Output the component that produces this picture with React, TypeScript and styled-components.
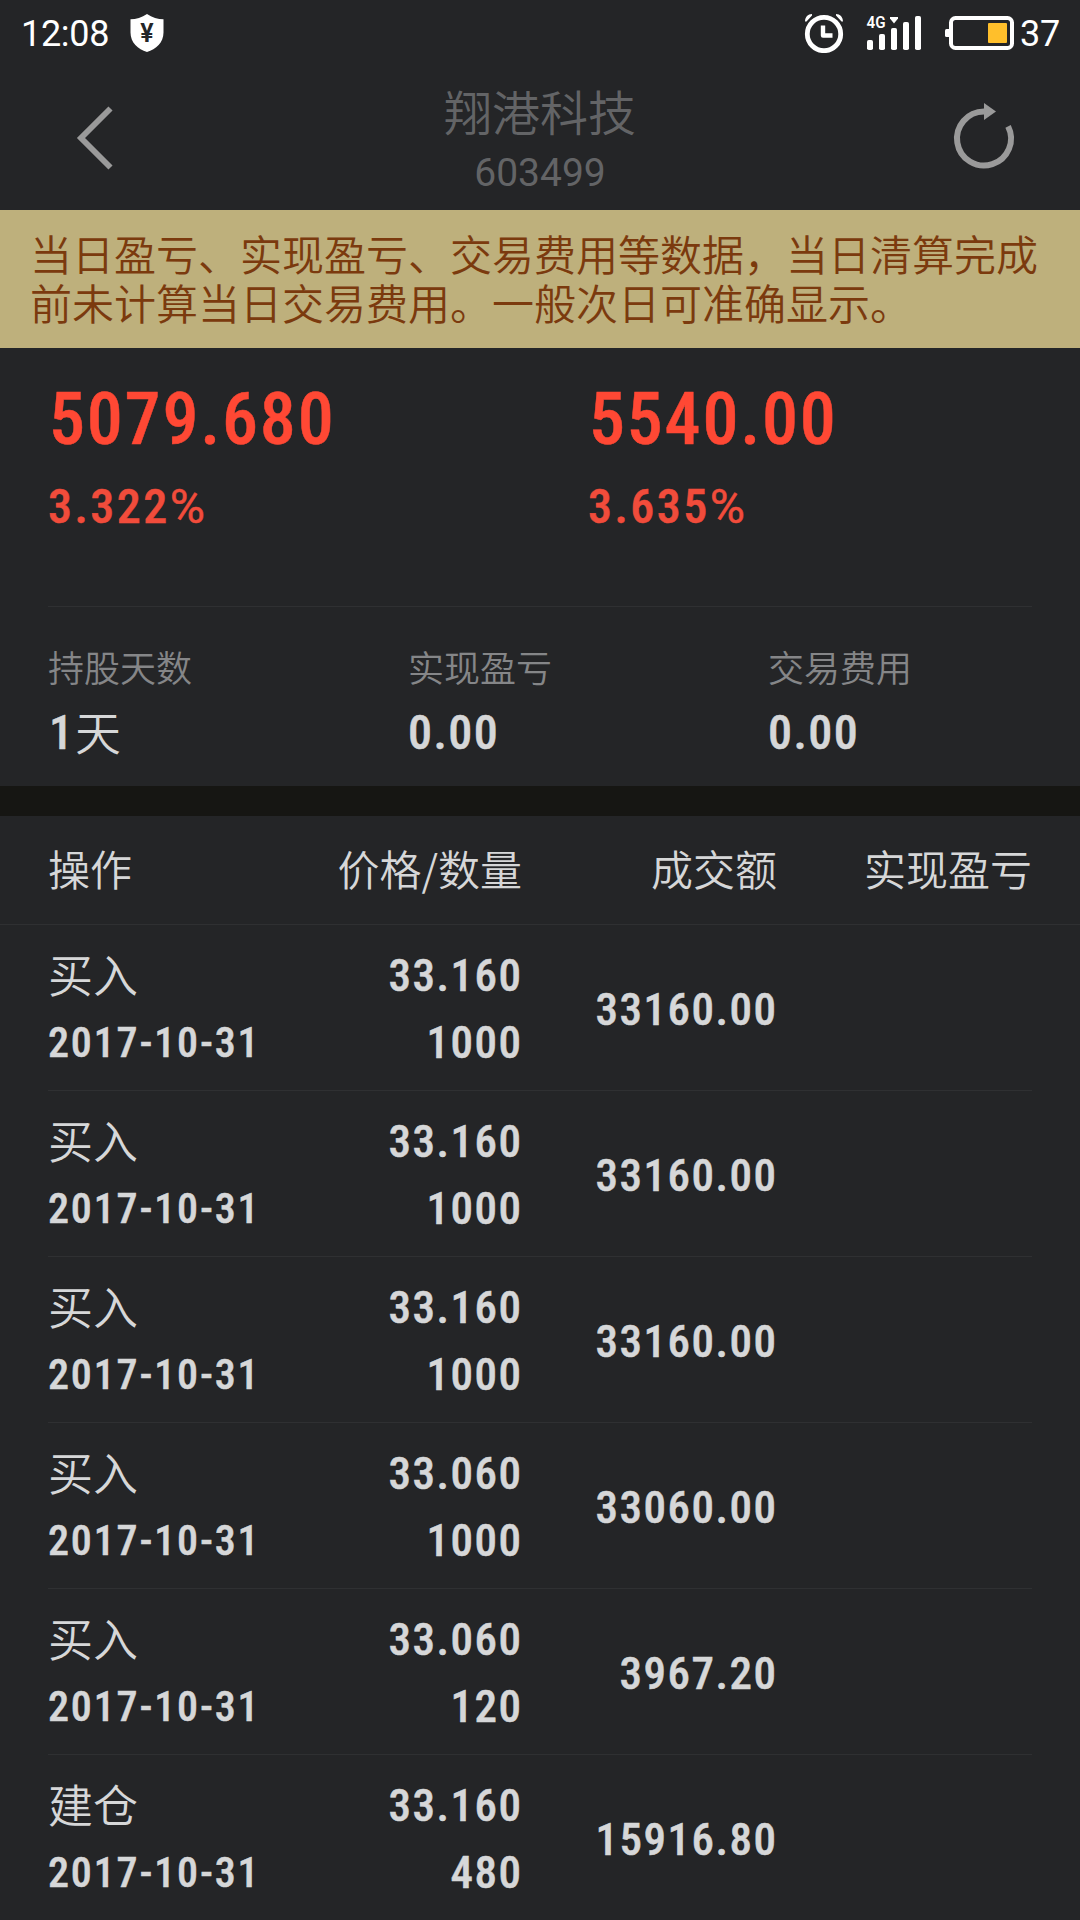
import React from "react";
import styled, { createGlobalStyle } from "styled-components";

const cjk = `"Noto Sans CJK SC", Roboto, sans-serif`;
const latin = `Roboto, "Noto Sans CJK SC", sans-serif`;

const GlobalStyle = createGlobalStyle`
  * { box-sizing: border-box; }
  body { margin: 0; background: #242527; }
`;

const Screen = styled.div`
  width: 1080px;
  height: 1920px;
  overflow: hidden;
  display: flex;
  flex-direction: column;
  background: #242527;
  color: #d6d7d8;
  font-family: ${cjk};
  font-weight: 350;
`;

const StatusBar = styled.div`
  height: 66px;
  flex: none;
  display: flex;
  align-items: center;
  padding: 0 20px 0 21px;
  color: #fff;
`;

const StatusText = styled.span<{ $left?: number; $width: number }>`
  flex: none;
  width: ${(p) => p.$width}px;
  margin-left: ${(p) => p.$left ?? 0}px;
  padding-top: 2px;
  font: 400 36px/64px ${latin};
  letter-spacing: -0.3px;
  white-space: nowrap;
`;

const StatusIcon = styled.svg<{ $left?: string }>`
  flex: none;
  display: block;
  margin-left: ${(p) => p.$left ?? "0"};
`;

const NavBar = styled.header`
  height: 144px;
  flex: none;
  display: grid;
  grid-template-columns: 190px 1fr 190px;
`;

const NavButton = styled.button<{ $align: "start" | "end" }>`
  display: flex;
  align-items: center;
  justify-content: ${(p) => (p.$align === "start" ? "flex-start" : "flex-end")};
  border: 0;
  padding: 0 62px 0 72px;
  background: none;
  svg { flex: none; display: block; }
`;

const TitleBlock = styled.div`
  display: flex;
  flex-direction: column;
  align-items: center;
  padding-top: 14px;
  color: #636466;
`;

const Title = styled.div`
  font-size: 48px;
  line-height: 60px;
`;

const Code = styled.div`
  font: 400 39px/60px ${latin};
  padding-top: 3px;
`;

const Notice = styled.div`
  height: 138px;
  flex: none;
  padding: 22px 30px 0;
  background: #beb07c;
  color: #7b3a0e;
  font-family: ${latin};
  font-size: 42px;
  line-height: 49px;
  white-space: nowrap;
`;

const Num = styled.span<{ $size: number; $line?: number; $gap?: number }>`
  font-family: ${latin};
  font-weight: 500;
  font-size: ${(p) => p.$size}px;
  line-height: ${(p) => p.$line ?? 60}px;
  letter-spacing: ${(p) => p.$gap ?? 1.5}px;
  margin-right: ${(p) => -(p.$gap ?? 1.5)}px;
  font-stretch: 87.5%;
  -webkit-text-stroke: 0.5px currentColor;
  white-space: nowrap;
`;

const Summary = styled.section`
  height: 258px;
  flex: none;
  display: grid;
  grid-template-columns: 540px 1fr;
  padding-left: 48px;
  color: #ff4834;
`;

const SummaryItem = styled.div`
  display: flex;
  flex-direction: column;
  padding-top: 32px;
`;

const Profit = styled(Num)`
  padding-left: 1px;
`;

const Percent = styled(Num)`
  margin-top: 17px;
  color: #f14c3b;
`;

const PercentSign = styled.span`
  font-stretch: 100%;
  font-weight: 400;
`;

const Divider = styled.div<{ $full?: boolean }>`
  height: 1px;
  flex: none;
  margin: ${(p) => (p.$full ? "0" : "0 48px")};
  background: #2f3032;
`;

const Stats = styled.section`
  height: 179px;
  flex: none;
  display: grid;
  grid-template-columns: repeat(3, 360px);
  padding-left: 48px;
`;

const Stat = styled.div`
  display: flex;
  flex-direction: column;
  padding-top: 34px;
`;

const StatLabel = styled.span`
  color: #858688;
  font-size: 36px;
  line-height: 50px;
`;

const StatValue = styled.div<{ $inset?: number }>`
  padding: 12px 0 0 ${(p) => p.$inset ?? 0}px;
  display: flex;
  align-items: flex-start;
  line-height: 60px;
`;

const Unit = styled.span`
  font-family: ${latin};
  font-size: 46px;
  line-height: 62px;
  margin-left: 2px;
`;

const Band = styled.div`
  height: 30px;
  flex: none;
  background: #161613;
`;

const columns = "220px 254px 255px 255px";

const TableHead = styled.div`
  height: 108px;
  flex: none;
  display: grid;
  grid-template-columns: ${columns};
  align-items: center;
  padding: 0 0 4px 48px;
  font-size: 42px;
  line-height: 60px;
`;

const HeadCell = styled.span<{ $right?: boolean }>`
  text-align: ${(p) => (p.$right ? "right" : "left")};
  white-space: nowrap;
`;

const Row = styled.div`
  height: 165px;
  flex: none;
  display: grid;
  grid-template-columns: ${columns};
  align-items: center;
  padding: 3px 0 0 48px;
`;

const Pair = styled.div<{ $right?: boolean }>`
  display: flex;
  flex-direction: column;
  align-items: ${(p) => (p.$right ? "flex-end" : "flex-start")};
  gap: 7px;
  padding-right: ${(p) => (p.$right ? 1 : 0)}px;
`;

const Action = styled.span`
  margin: -2px 0 2px;
  font-size: 45px;
  line-height: 60px;
`;

const Amount = styled.div`
  display: flex;
  justify-content: flex-end;
  padding: 2px 1px 0 0;
`;

const trades = [
  ["买入", "33.160", "1000", "33160.00"],
  ["买入", "33.160", "1000", "33160.00"],
  ["买入", "33.160", "1000", "33160.00"],
  ["买入", "33.060", "1000", "33060.00"],
  ["买入", "33.060", "120", "3967.20"],
  ["建仓", "33.160", "480", "15916.80"],
];

const ShieldIcon = () => (
  <StatusIcon $left="21px" width="34" height="38" viewBox="0 0 34 38">
    <path d="M17 0C12 3.500 6 5.200.500 5.200V18.500C.500 28.500 8 35.500 17 38C26 35.500 33.500 28.500 33.500 18.500V5.200C28 5.200 22 3.500 17 0Z" fill="#fff" />
    <text x="17" y="28" textAnchor="middle" fontFamily="Roboto, sans-serif" fontWeight="600" fontSize="25" fill="#242527">¥</text>
  </StatusIcon>
);

const AlarmIcon = () => (
  <StatusIcon $left="auto" width="40" height="40" viewBox="0 0 40 40" fill="none" stroke="#fff">
    <circle cx="20" cy="21" r="16.700" strokeWidth="4.800" />
    <path d="M19 12.500V22.500H28.500" strokeWidth="4.400" strokeLinejoin="round" />
    <path d="M1 8.500C1 4 4 1 8 1V2.500L2.500 8.500ZM39 8.500C39 4 36 1 32 1V2.500L37.500 8.500Z" fill="#fff" stroke="none" />
  </StatusIcon>
);

const SignalIcon = () => (
  <StatusIcon $left="22px" width="56" height="44" viewBox="0 -4 56 44" fill="#fff">
    {[0, 1, 2, 3, 4].map((i) => (
      <rect key={i} x={1 + i * 12} y={25 - i * 6} width="6" height={10 + i * 6} rx="1.800" />
    ))}
    <text x="0.500" y="13" fontFamily="Roboto, sans-serif" fontWeight="600" fontSize="16" textLength="19" lengthAdjust="spacingAndGlyphs">4G</text>
    <path d="M24 2H32V3.500L28 8.500L24 3.500Z" />
  </StatusIcon>
);

const BatteryIcon = () => (
  <StatusIcon $left="23px" width="70" height="34" viewBox="0 0 70 34">
    <rect x="0" y="13" width="6" height="8" rx="1.500" fill="#fff" />
    <rect x="6" y="2" width="61" height="30" rx="4.500" fill="none" stroke="#fff" strokeWidth="4" />
    <rect x="43" y="7" width="19" height="20" rx="1" fill="#ffbf2b" />
  </StatusIcon>
);

export default function App() {
  return (
    <Screen>
      <GlobalStyle />
      <StatusBar>
        <StatusText $width={88}>12:08</StatusText>
        <ShieldIcon />
        <AlarmIcon />
        <SignalIcon />
        <BatteryIcon />
        <StatusText $left={5} $width={40}>37</StatusText>
      </StatusBar>
      <NavBar>
        <NavButton $align="start" aria-label="返回">
          <svg width="44" height="68" viewBox="0 0 44 68" fill="none" stroke="#9a9a9a" strokeWidth="5.800">
            <path d="M38.500 4.500L9 34L38.500 63.500" />
          </svg>
        </NavButton>
        <TitleBlock>
          <Title>翔港科技</Title>
          <Code>603499</Code>
        </TitleBlock>
        <NavButton $align="end" aria-label="刷新">
          <svg width="68" height="76" viewBox="0 0 68 76">
            <path d="M58.100 26.300A27 27 0 1 1 34 11.500" fill="none" stroke="#9a9a9a" strokeWidth="6" />
            <path d="M34 3L46 11.500L34 20Z" fill="#9a9a9a" />
          </svg>
        </NavButton>
      </NavBar>
      <Notice>
        当日盈亏、实现盈亏、交易费用等数据，当日清算完成
        <br />
        前未计算当日交易费用。一般次日可准确显示。
      </Notice>
      <Summary>
        <SummaryItem>
          <Profit $size={72} $line={80} $gap={1.8}>5079.680</Profit>
          <Percent $size={48} $gap={2.5}>3.322<PercentSign>%</PercentSign></Percent>
        </SummaryItem>
        <SummaryItem>
          <Profit $size={72} $line={80} $gap={1.8}>5540.00</Profit>
          <Percent $size={48} $gap={2.5}>3.635<PercentSign>%</PercentSign></Percent>
        </SummaryItem>
      </Summary>
      <Divider />
      <Stats>
        <Stat>
          <StatLabel>持股天数</StatLabel>
          <StatValue $inset={1}><Num $size={48}>1</Num><Unit>天</Unit></StatValue>
        </Stat>
        <Stat>
          <StatLabel>实现盈亏</StatLabel>
          <StatValue><Num $size={48}>0.00</Num></StatValue>
        </Stat>
        <Stat>
          <StatLabel>交易费用</StatLabel>
          <StatValue><Num $size={48}>0.00</Num></StatValue>
        </Stat>
      </Stats>
      <Band />
      <TableHead>
        <HeadCell>操作</HeadCell>
        <HeadCell $right>价格/数量</HeadCell>
        <HeadCell $right>成交额</HeadCell>
        <HeadCell $right>实现盈亏</HeadCell>
      </TableHead>
      <Divider $full />
      {trades.map(([action, price, count, amount], i) => (
        <React.Fragment key={i}>
          {i > 0 && <Divider />}
          <Row>
            <Pair>
              <Action>{action}</Action>
              <Num $size={42} $gap={1.85}>2017-10-31</Num>
            </Pair>
            <Pair $right>
              <Num $size={45}>{price}</Num>
              <Num $size={45}>{count}</Num>
            </Pair>
            <Amount>
              <Num $size={45}>{amount}</Num>
            </Amount>
          </Row>
        </React.Fragment>
      ))}
    </Screen>
  );
}
